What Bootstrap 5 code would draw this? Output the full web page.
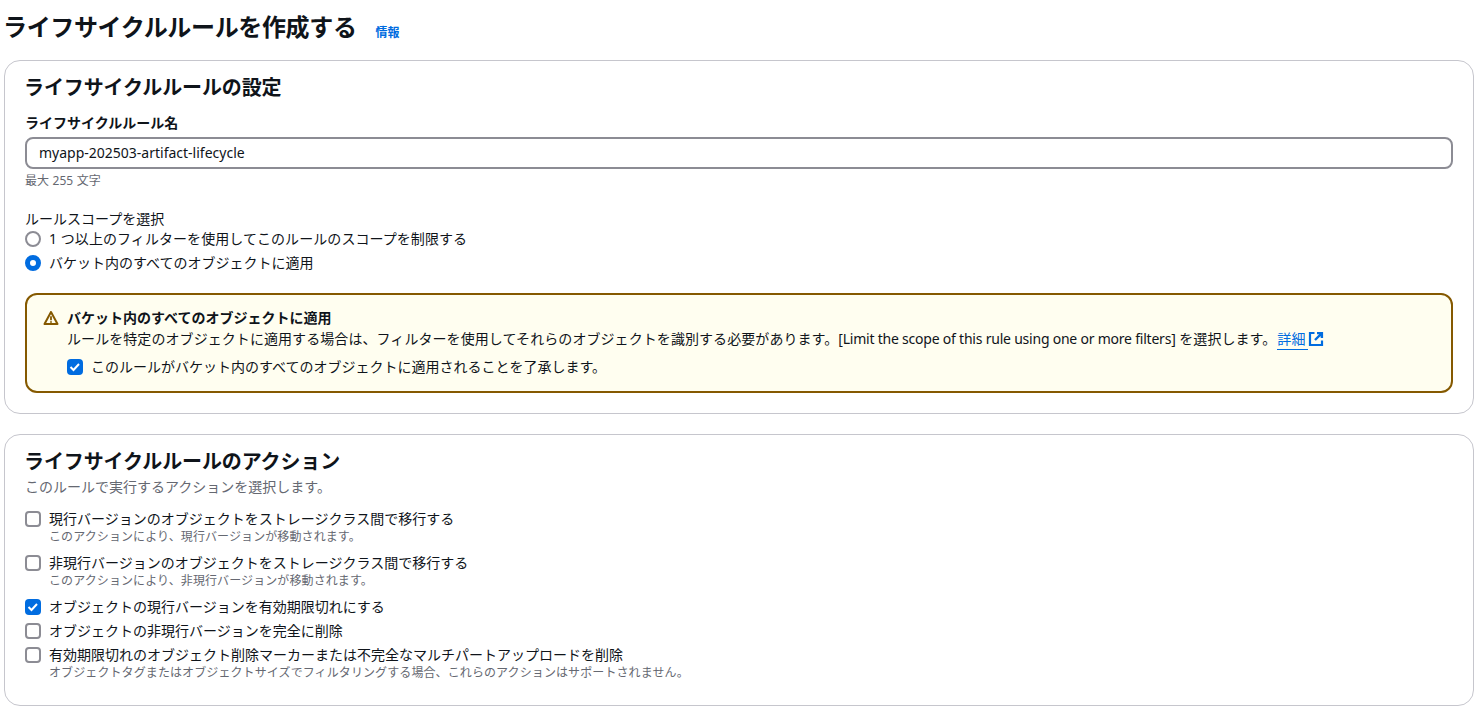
<!DOCTYPE html>
<html lang="ja">
<head>
<meta charset="utf-8">
<title>ライフサイクルルールを作成する</title>
<link href="https://cdn.jsdelivr.net/npm/bootstrap@5.3.0/dist/css/bootstrap.min.css" rel="stylesheet">
<style>
:root{--ink:#0f141a;--muted:#656871;--blue:#006ce0;--line:#c6c6cd;--ctl:#8c8c94;}
html,body{height:710px;overflow:hidden;background:#fff;}
body{font-family:"Noto Sans","Noto Sans CJK JP",sans-serif;font-size:14px;line-height:20px;color:var(--ink);padding:0 3px 0 4px;}
.page-head{height:60px;padding-top:10px;}
.page-title{font-size:24px;line-height:34px;font-weight:700;margin:0 0 0 -1px;letter-spacing:-.35px;}
.info-link{font-size:12px;font-weight:700;color:var(--blue);text-decoration:none;margin:13px 0 0 19px;line-height:20px;}
.panel{border:1px solid var(--line);border-radius:16px;padding:13px 20px 0;background:#fff;}
.panel-a{height:354px;margin-bottom:20px;}
.panel-b{height:272px;}
.panel-title{font-size:20px;line-height:28px;font-weight:700;margin:0 0 0 -1px;letter-spacing:-.12px;}
.field-label{font-weight:700;font-size:14px;line-height:20px;margin:11px 0 4px;display:block;}
.name-input{height:32px;border:2px solid var(--ctl);border-radius:8px;padding:0 12px 2px;font-size:14px;color:var(--ink);width:100%;box-shadow:none;}
.hint{font-size:12px;line-height:16px;color:var(--muted);}
.hint-a{margin-top:4px;word-spacing:.5px;}
.scope-label{margin-top:20px;line-height:20px;}
.opt{display:flex;gap:8px;align-items:flex-start;line-height:20px;}
.opt-gap{margin-top:4px;}
.opt-wide{letter-spacing:.065px;}
.ctl-radio{width:16px;height:16px;margin-top:2px;flex:none;border-radius:50%;border:2px solid var(--ctl);background:#fff;}
.ctl-radio.on{border:5px solid var(--blue);}
.ctl-box{width:16px;height:16px;margin-top:2px;flex:none;border-radius:4px;border:2px solid var(--ctl);background:#fff;display:flex;}
.ctl-box.on{border:0;background:var(--blue);}
.warn{margin-top:20px;height:100px;background:#fffef0;border:2px solid #855900;border-radius:12px;padding:13px 16px 0;display:flex;gap:8px;}
.warn-icon{flex:none;width:16px;height:16px;margin-top:2px;}
.warn-title{font-weight:700;line-height:20px;}
.warn-body{margin-top:1px;letter-spacing:.07px;}
.warn-check{margin-top:8px;}
.latin-run{letter-spacing:-.22px;}
.more-link{color:var(--blue);text-decoration:none;border-bottom:1px solid var(--blue);padding-bottom:1px;padding-right:3px;margin-left:1px;}
.ext-icon{width:16px;height:16px;vertical-align:-3px;margin-left:0;}
.desc{line-height:20px;margin-top:1px;}
.act-list{margin-top:12px;}
.sub-hint{font-size:12px;line-height:16px;color:var(--muted);margin-top:0;letter-spacing:.1px;}
.act-gap{margin-top:8px;}
</style>
</head>
<body>
<div class="page-head d-flex align-items-start">
  <h1 class="page-title">ライフサイクルルールを作成する</h1>
  <a class="info-link" href="#">情報</a>
</div>

<section class="panel panel-a">
  <h2 class="panel-title">ライフサイクルルールの設定</h2>
  <label class="field-label" for="rn">ライフサイクルルール名</label>
  <input id="rn" class="name-input d-block" type="text" value="myapp-202503-artifact-lifecycle">
  <div class="hint hint-a">最大 255 文字</div>
  <div class="scope-label">ルールスコープを選択</div>
  <div class="opt opt-wide"><span class="ctl-radio"></span><span>1 つ以上のフィルターを使用してこのルールのスコープを制限する</span></div>
  <div class="opt opt-gap"><span class="ctl-radio on"></span><span>バケット内のすべてのオブジェクトに適用</span></div>
  <div class="warn">
    <svg class="warn-icon" viewBox="0 0 16 16" fill="none" stroke="#855900" stroke-width="2" stroke-linejoin="round"><path d="M8 2 1.5 14h13z"/><path d="M8 6.2v4M8 11.2v1.6" stroke-width="1.8"/></svg>
    <div class="flex-grow-1">
      <div class="warn-title">バケット内のすべてのオブジェクトに適用</div>
      <div class="warn-body">ルールを特定のオブジェクトに適用する場合は、フィルターを使用してそれらのオブジェクトを識別する必要があります。<span class="latin-run">[Limit the scope of this rule using one or more filters]</span> を選択します。<a class="more-link" href="#">詳細</a><svg class="ext-icon" viewBox="0 0 16 16" fill="none" stroke="#006ce0" stroke-width="2.2"><path d="M6.5 2H2v12h12V9.5"/><path d="M9 2.1h4.9V7M13.9 2.1 7 9" stroke-width="2.4"/></svg></div>
      <div class="opt warn-check"><span class="ctl-box on"><svg viewBox="0 0 16 16" fill="none" stroke="#fff" stroke-width="2"><path d="m3.5 8 3 3 5.5-6"/></svg></span><span>このルールがバケット内のすべてのオブジェクトに適用されることを了承します。</span></div>
    </div>
  </div>
</section>

<section class="panel panel-b">
  <h2 class="panel-title">ライフサイクルルールのアクション</h2>
  <div class="desc" style="color:var(--muted)">このルールで実行するアクションを選択します。</div>
  <div class="act-list">
    <div class="opt"><span class="ctl-box"></span><div><div>現行バージョンのオブジェクトをストレージクラス間で移行する</div><div class="sub-hint">このアクションにより、現行バージョンが移動されます。</div></div></div>
    <div class="opt act-gap"><span class="ctl-box"></span><div><div>非現行バージョンのオブジェクトをストレージクラス間で移行する</div><div class="sub-hint">このアクションにより、非現行バージョンが移動されます。</div></div></div>
    <div class="opt act-gap"><span class="ctl-box on"><svg viewBox="0 0 16 16" fill="none" stroke="#fff" stroke-width="2"><path d="m3.5 8 3 3 5.5-6"/></svg></span><div>オブジェクトの現行バージョンを有効期限切れにする</div></div>
    <div class="opt opt-gap"><span class="ctl-box"></span><div>オブジェクトの非現行バージョンを完全に削除</div></div>
    <div class="opt opt-gap"><span class="ctl-box"></span><div><div>有効期限切れのオブジェクト削除マーカーまたは不完全なマルチパートアップロードを削除</div><div class="sub-hint">オブジェクトタグまたはオブジェクトサイズでフィルタリングする場合、これらのアクションはサポートされません。</div></div></div>
  </div>
</section>
<script src="https://cdn.jsdelivr.net/npm/bootstrap@5.3.0/dist/js/bootstrap.bundle.min.js"></script>
</body>
</html>
